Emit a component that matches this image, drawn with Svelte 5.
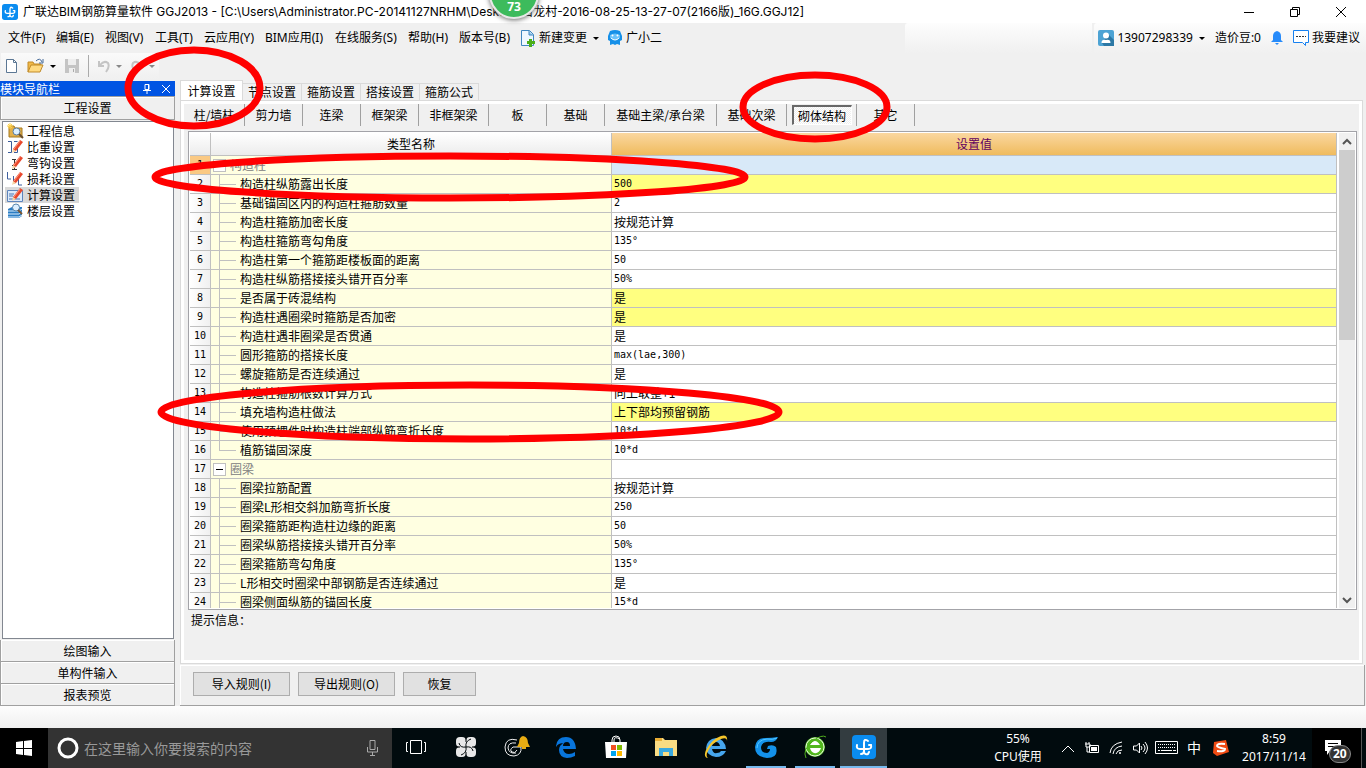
<script lang="ts">
  type Row = { name: string; value: string; group?: boolean; last?: boolean; changed?: boolean };

  const menus = [
    ['文件(F)', 48], ['编辑(E)', 49], ['视图(V)', 50], ['工具(T)', 49], ['云应用(Y)', 61],
    ['BIM应用(I)', 70], ['在线服务(S)', 73], ['帮助(H)', 51], ['版本号(B)', 61],
  ] as [string, number][];

  const tabs = ['计算设置', '节点设置', '箍筋设置', '搭接设置', '箍筋公式'];

  const members = [
    ['柱/墙柱', 61], ['剪力墙', 58], ['连梁', 58], ['框架梁', 58], ['非框架梁', 70], ['板', 58],
    ['基础', 58], ['基础主梁/承台梁', 112], ['基础次梁', 70], ['砌体结构', 70], ['其它', 58],
  ] as [string, number][];

  const navItems = [
    { label: '工程信息', icon: 'info' },
    { label: '比重设置', icon: 'weight' },
    { label: '弯钩设置', icon: 'hook' },
    { label: '损耗设置', icon: 'loss' },
    { label: '计算设置', icon: 'calc' },
    { label: '楼层设置', icon: 'floor' },
  ];

  const rows: Row[] = [
    { name: '构造柱', value: '', group: true },
    { name: '构造柱纵筋露出长度', value: '500', changed: true },
    { name: '基础锚固区内的构造柱箍筋数量', value: '2' },
    { name: '构造柱箍筋加密长度', value: '按规范计算' },
    { name: '构造柱箍筋弯勾角度', value: '135°' },
    { name: '构造柱第一个箍筋距楼板面的距离', value: '50' },
    { name: '构造柱纵筋搭接接头错开百分率', value: '50%' },
    { name: '是否属于砖混结构', value: '是', changed: true },
    { name: '构造柱遇圈梁时箍筋是否加密', value: '是', changed: true },
    { name: '构造柱遇非圈梁是否贯通', value: '是' },
    { name: '圆形箍筋的搭接长度', value: 'max(lae,300)' },
    { name: '螺旋箍筋是否连续通过', value: '是' },
    { name: '构造柱箍筋根数计算方式', value: '向上取整+1' },
    { name: '填充墙构造柱做法', value: '上下部均预留钢筋', changed: true },
    { name: '使用预埋件时构造柱端部纵筋弯折长度', value: '10*d' },
    { name: '植筋锚固深度', value: '10*d', last: true },
    { name: '圈梁', value: '', group: true },
    { name: '圈梁拉筋配置', value: '按规范计算' },
    { name: '圈梁L形相交斜加筋弯折长度', value: '250' },
    { name: '圈梁箍筋距构造柱边缘的距离', value: '50' },
    { name: '圈梁纵筋搭接接头错开百分率', value: '50%' },
    { name: '圈梁箍筋弯勾角度', value: '135°' },
    { name: 'L形相交时圈梁中部钢筋是否连续通过', value: '是' },
    { name: '圈梁侧面纵筋的锚固长度', value: '15*d' },
  ];

  // values made of Latin characters only are set in the fixed-width face
  const isLatin = (text: string) => /^[\x20-\xff]+$/.test(text);

  let activeTab = $state('计算设置');
  let activeMember = $state('砌体结构');
  let activeNav = $state('计算设置');
  let query = $state('');
</script>

{#snippet logo()}
  <rect width="24" height="24" rx="4" fill="#0a8cf0" />
  <path d="M16 6q-4-3-4 2v8q0 4 4 3l1-2M9 19q3 0 3-3M5 10q-1 4 3 4h8q4 0 3-4l-2 0" fill="none" stroke="#fff" stroke-width="2" stroke-linecap="round" />
{/snippet}

{#snippet pencil()}
  <path d="M6 10l7-9 3 2-7 9-3 1z" fill="#e8472c" />
  <path d="M7 10l6-8" stroke="#ff9a80" />
  <path d="M6 10l3 2-4 2z" fill="#f5d7a8" />
{/snippet}

<div class="desktop">
  <header class="titlebar">
    <svg class="app-icon" viewBox="0 0 24 24">{@render logo()}</svg>
    <span class="title">广联达BIM钢筋算量软件 GGJ2013 - [C:\Users\Administrator.PC-20141127NRHM\Desktop\白龙村-2016-08-25-13-27-07(2166版)_16G.GGJ12]</span>
    <div class="window-buttons">
      <button aria-label="最小化"><svg width="12" height="12"><path d="M1 6.500h10" /></svg></button>
      <button aria-label="还原"><svg width="12" height="12"><path d="M1.500 3.500h7v7h-7zM3.500 3v-1.500h7v7H9" /></svg></button>
      <button aria-label="关闭"><svg width="12" height="12"><path d="M1 1l10 10M11 1L1 11" /></svg></button>
    </div>
  </header>

  <nav class="menubar">
    {#each menus as [label, width]}
      <button style={`width: ${width}px`}>{label}</button>
    {/each}
    <button class="with-icon change">
      <svg width="16" height="18"><path d="M1.500 1.500h8l4 4v11h-12z" fill="#eef7ff" stroke="#3f86c0" /><path d="M9 2v4h4" fill="#9ccbee" stroke="#3f86c0" /><path d="M9 10h3v2h3v3h-3v3H9v-3H7v-3h2z" fill="#4bae18" /></svg>
      新建变更
      <i class="caret"></i>
    </button>
    <button class="with-icon">
      <svg width="16" height="16"><path d="M3 1q5-2 10 0l2 5v4l-2 1v4l-3-1-2 1-2-1-3 1v-4L1 10V6z" fill="#1690e8" /><path d="M3 5q5-3 10 0v3q-5 4-10 0z" fill="#69c1fa" /><circle cx="5.500" cy="5.500" r="1" fill="#fff" /><circle cx="10.500" cy="5.500" r="1" fill="#fff" /><path d="M4 8q4 4 8 0" fill="none" stroke="#fff" /></svg>
      广小二
    </button>
    <div class="account-area">
      <div class="account-blank"></div>
      <div class="account">
        <button class="with-icon user">
          <svg width="16" height="16"><rect width="16" height="16" rx="2" fill="#4da3d4" /><path d="M10 4l6 6v6H6l-2-3z" fill="#2c78a5" /><circle cx="8" cy="5.500" r="3" fill="#fff" /><path d="M3.500 13q0-4 4.500-3 4.500-1 4.500 3z" fill="#fff" /></svg>
          13907298339
          <i class="caret"></i>
        </button>
        <button>造价豆:0</button>
        <button class="bell" aria-label="通知"><svg width="12" height="16"><path d="M6 1q4 1 4 5v4l2 2H0l2-2V6q0-4 4-5zM4 13h4l-2 2z" fill="#278bfa" /></svg></button>
        <button class="with-icon">
          <svg width="16" height="16"><path d="M.500.500h15v12h-3v3l-3-3h-9z" fill="#fff" stroke="#1680f0" /><path d="M3 6.500h10" stroke="#333" stroke-dasharray="2 1" /></svg>
          我要建议
        </button>
      </div>
    </div>
  </nav>

  <div class="toolbar">
    <div class="tools">
      <button aria-label="新建"><svg width="14" height="16"><path d="M1.500 1.500h7l3 3v10h-10z" fill="#fff" stroke="#5b7794" /><path d="M8.500 1.500v3h3" fill="none" stroke="#5b7794" /></svg></button>
      <button class="open" aria-label="打开"><svg width="18" height="16"><path d="M1 14V4h5l1 2h7v2" fill="#f1b947" stroke="#c08a28" /><path d="M1 14l3-7h12l-3 7z" fill="#ffda80" stroke="#c08a28" /><path d="M9 3q4-4 6 1m1-3v4h-4" fill="none" stroke="#456a99" /></svg><i class="caret"></i></button>
      <button aria-label="保存"><svg width="16" height="16"><path d="M1 1h14v14H1z" fill="#c4c4c4" /><path d="M4 1h8v6H4zM5 10h6v5H5z" fill="#eee" /><path d="M9 11h1v3H9z" fill="#aaa" /></svg></button>
      <span class="divider"></span>
      <button class="faded" aria-label="撤消"><svg width="14" height="14"><path d="M2 2v5h5M3 6q4-5 8-2 2 4-2 9" /></svg><i class="caret"></i></button>
      <button class="faded" aria-label="恢复"><svg width="14" height="14"><path d="M12 2v5H7m4-1q-4-5-8-2-2 4 2 9" /></svg><i class="caret"></i></button>
    </div>
  </div>

  <div class="workspace">
    <aside class="sidebar">
      <div class="side-head">
        <span>模块导航栏</span>
        <button aria-label="固定"><svg width="10" height="10"><path d="M3 .500h4v5H3zM6.500 1v5M1 6.500h8M5 6v4" /></svg></button>
        <button aria-label="关闭"><svg width="10" height="10"><path d="M1 1l8 8M9 1L1 9" /></svg></button>
      </div>
      <button class="side-button">工程设置</button>
      <ul class="nav-list">
        {#each navItems as item}
          <li>
            <button class:selected={item.label === activeNav} onclick={() => (activeNav = item.label)}>
              <svg width="17" height="16">
                {#if item.icon === 'info'}
                  <path d="M2 3h5l1 2h7v9H2z" fill="#e3b04a" stroke="#a67a20" /><path d="M0 3h6M3 0v6M1 1l4 4M5 1L1 5" stroke="#ffd24a" /><circle cx="9.500" cy="8.500" r="3.500" fill="#dcf0ff" stroke="#587ba0" /><path d="M12 11l4 4" stroke="#6a5030" stroke-width="2" />
                {:else if item.icon === 'weight'}
                  <path d="M1 2.500h3.500v11H1M7 2.500h3.500M8 8.500h2.500v5H7" fill="none" stroke="#3b5c9a" />{@render pencil()}
                {:else if item.icon === 'hook'}
                  <path d="M5 4.500h4M7.500 5v10M5 14.500h5M5 10.500h4" fill="none" stroke="#333" />{@render pencil()}
                {:else if item.icon === 'loss'}
                  <path d="M.500 1v7H4M6.500 5v7M11.500 8v6H15" fill="none" stroke="#3f5f9f" />{@render pencil()}
                {:else if item.icon === 'calc'}
                  <path d="M.500 3.500h15v11H.500z" fill="#dceafa" stroke="#5c84bc" /><path d="M2 7h5M2 9h4M2 12h11" stroke="#4d78b5" />{@render pencil()}
                {:else}
                  <path d="M1 6l4-2h10v9l-3 2H1z" fill="#2b7dc4" /><path d="M1 8h11l3-2M1 11h11l3-2M1 14h11l3-2" fill="none" stroke="#e0f2ff" /><circle cx="9" cy="4.500" r="3.500" fill="#dcefff" stroke="#5585ad" /><path d="M11 7l4 4" stroke="#765533" stroke-width="2" />
                {/if}
              </svg>
              <span>{item.label}</span>
            </button>
          </li>
        {/each}
      </ul>
      <button class="side-button">绘图输入</button>
      <button class="side-button">单构件输入</button>
      <button class="side-button">报表预览</button>
    </aside>

    <main>
      <div class="tabs">
        {#each tabs as tab}
          <button class:active={tab === activeTab} onclick={() => (activeTab = tab)}>{tab}</button>
        {/each}
      </div>
      <section class="panel">
        <div class="members">
          {#each members as [label, width]}
            <div class="member" style={`width: ${width}px`}>
              <button class:pressed={label === activeMember} onclick={() => (activeMember = label)}>{label}</button>
            </div>
          {/each}
        </div>
        <div class="grid-frame">
          <div class="grid">
            <table>
              <colgroup><col class="col-no" /><col class="col-name" /><col /></colgroup>
              <thead>
                <tr><th></th><th>类型名称</th><th class="current">设置值</th></tr>
              </thead>
              <tbody>
                {#each rows as row, i}
                  <tr class:changed={row.changed} class:focused={i === 0}>
                    <td class="no"><div>{i + 1}</div></td>
                    <td class="name">
                      <div>
                        {#if row.group}
                          <button class="toggle" aria-label="折叠"></button><span class="group">{row.name}</span>
                        {:else}
                          <i class="branch" class:last={row.last}></i><span>{row.name}</span>
                        {/if}
                      </div>
                    </td>
                    <td class="value"><div class:latin={isLatin(row.value)}>{row.value}</div></td>
                  </tr>
                {/each}
              </tbody>
            </table>
          </div>
          <div class="scrollbar">
            <button aria-label="向上"><svg width="10" height="8"><path d="M1 6l4-4 4 4" /></svg></button>
            <div class="thumb"></div>
            <button aria-label="向下"><svg width="10" height="8"><path d="M1 2l4 4 4-4" /></svg></button>
          </div>
        </div>
        <p class="hint">提示信息：</p>
      </section>
      <footer class="actions">
        <button>导入规则(I)</button>
        <button>导出规则(O)</button>
        <button class="short">恢复</button>
      </footer>
    </main>
  </div>

  <div class="status"></div>

  <div class="taskbar">
    <button class="start" aria-label="开始"><svg width="16" height="16"><path d="M0 2l7-1v7H0zM8 1l8-1v8H8zM0 9h7v6l-7-1zM8 9h8v7l-8-1z" fill="#fff" /></svg></button>
    <div class="search">
      <svg width="24" height="24"><circle cx="12" cy="12" r="9" fill="none" stroke="#fff" stroke-width="3" /></svg>
      <input aria-label="搜索" placeholder="在这里输入你要搜索的内容" bind:value={query} />
      <svg width="12" height="18"><path d="M4 1.500h5v9H4zM1.500 8v5h10V8M6.500 13v4M4 16.500h5" fill="none" stroke="#aaa" /></svg>
    </div>
    <div class="apps">
      <button aria-label="任务视图"><svg width="22" height="16"><path d="M5.500 1.500h11v13h-11zM3 3.500H1.500v9H3M19 3.500h1.500v9H19" fill="none" stroke="#fff" /></svg></button>
      <button aria-label="风扇"><svg width="22" height="22"><g fill="#e8e8e8"><rect x="1" y="1" width="10" height="10" rx="4" /><rect x="11" y="1" width="10" height="10" rx="4" /><rect x="1" y="11" width="10" height="10" rx="4" /><rect x="11" y="11" width="10" height="10" rx="4" /><circle cx="11" cy="11" r="4" /></g><path d="M11 11Q5 12 4 7M11 11q-1-6 5-8M11 11q6-1 7 4M11 11q1 6-5 8M11 1v5M11 16v5M1 11h4M17 11h4" fill="none" stroke="#02090b" /></svg></button>
      <button aria-label="提醒"><svg width="28" height="24"><path d="M15 5Q4 2 3 12q0 9 9 9 8-1 7-9h-8q-4 3-1 5 3 2 5-2M14 8Q6 7 6 13q1 6 8 5" fill="none" stroke="#eee" /><path d="M21 1q5 1 5 7l2 4H15l2-4q0-6 4-7zM20 12h4v2h-4z" fill="#e9ad13" /></svg></button>
      <button aria-label="Edge"><svg width="22" height="22"><path d="M1 10Q2 1 11 1q9 0 10 12H8q1 5 6 5 3 0 6-2v4q-4 2-8 2-8-1-8-8 0-5 5-7-6 0-8 4zm7 0h7q0-4-3-4-4 0-4 4z" fill="#0875dc" /></svg></button>
      <button aria-label="应用商店"><svg width="24" height="24"><path d="M8 8V5q0-4 4-4t4 4v3M10 8V5q0-4 6-1" fill="none" stroke="#fff" /><path d="M1 7h22l-1 16H2z" fill="#fff" /><path d="M7 10h5v5H7z" fill="#f25022" /><path d="M13 10h5v5h-5z" fill="#7fba00" /><path d="M7 16h5v5H7z" fill="#00a4ef" /><path d="M13 16h5v5h-5z" fill="#ffb900" /></svg></button>
      <button aria-label="文件资源管理器"><svg width="24" height="20"><path d="M1 1h8l2 2h12v16H1z" fill="#f9dc83" /><path d="M1 1h7v3H1z" fill="#e9ae35" /><path d="M5 19v-8h14v8h-4v-4H9v4z" fill="#39a9e0" /></svg></button>
      <button aria-label="Internet Explorer"><svg width="26" height="24"><path d="M3 13Q4 4 13 3q9 1 10 11H9q1 5 5 4 3 0 4-2h5q-3 6-10 6Q4 21 3 13zm6-2h8q-1-4-4-4t-4 4z" fill="#46a6ed" /><path d="M5 23q-5-1-2-8Q9 4 18 1q7-2 6 5 0-4-6-2Q8 8 4 18q-1 4 1 5z" fill="#f6c62b" /></svg></button>
      <button class="running" aria-label="浏览器"><svg width="26" height="24"><path d="M25 2q-2 5-7 5-9-1-10 5 0 6 6 6 3-1 3-4l-3 0 1-3q5-2 8 1 3 11-9 11Q2 22 2 12 3 3 12 3q7 0 13-1z" fill="#1492ea" /><path d="M24 3q-4 2-10 1Q4 5 4 13" fill="none" stroke="#54c8ff" /></svg></button>
      <button class="running" aria-label="安全浏览器"><svg width="24" height="24"><circle cx="12" cy="12" r="10" fill="#52b71e" /><circle cx="12" cy="12" r="9" fill="none" stroke="#ecf9e5" /><path d="M7 10q5-8 10 0zM7 13h11q-2 6-7 5-3-1-4-5z" fill="#fff" /><path d="M3 23q-4-8 7-17 9-7 13-4" fill="none" stroke="#4fae1d" /></svg></button>
      <button class="running current" aria-label="广联达"><svg width="24" height="24">{@render logo()}</svg></button>
    </div>
    <div class="tray">
      <div class="cpu">55%<br />CPU使用</div>
      <button class="slot" aria-label="显示隐藏的图标"><svg width="14" height="9"><path d="M1 8l6-6 6 6" /></svg></button>
      <button class="slot" aria-label="电池"><svg width="16" height="14"><path d="M5.500 4.500h9v7h-9zM1 3h5v3H2V3M2 1v2M5 1v2M3 6v5h2" /><path class="solid" d="M7 6h6v4H7z" /></svg></button>
      <button class="slot" aria-label="网络"><svg width="14" height="14"><path d="M1 12Q2 3 13 1M4 13q1-7 9-8M7 13q1-4 6-4" /><circle cx="11" cy="12" r="1" fill="#fff" /></svg></button>
      <button class="slot" aria-label="音量"><svg width="17" height="14"><path d="M1.500 5h3l3-3v10l-3-3h-3zM9 5q2 2 0 4M11 3q4 4 0 8M13 1q5 6 0 12" /></svg></button>
      <button class="slot wide" aria-label="触摸键盘"><svg width="24" height="14"><path d="M.500.500h22v12H.500z" /><path d="M3 3.500h18M3 6.500h18" stroke-dasharray="1 1" /><path d="M3 9.500h2m1 0h11m1 0h3" /></svg></button>
      <button class="slot ime">中</button>
      <button class="slot wide" aria-label="搜狗输入法"><svg width="16" height="16"><path class="sogou" d="M1 2l12-2 3 12-12 4-4-3z" /><path class="thick" d="M12 4q-8-1-8 2 0 1 8 3 0 3-8 2" /></svg></button>
      <div class="clock">8:59<br />2017/11/14</div>
      <button class="notice" aria-label="操作中心"><svg width="16" height="16"><path class="solid" d="M0 0h16v11H5l-3 4v-4H0z" /><path class="dark" d="M3 3.500h10M3 6.500h8" /></svg><span>20</span></button>
    </div>
  </div>

  <div class="speed-ball">73</div>

  <svg class="marks" width="900" height="460" aria-hidden="true">
    <ellipse cx="194" cy="88" rx="66" ry="38" />
    <ellipse cx="815" cy="107" rx="72" ry="32" />
    <ellipse cx="450" cy="177" rx="295" ry="21" />
    <ellipse cx="470" cy="412" rx="309" ry="27" />
  </svg>
</div>

<style>
  :global(body) {
    margin: 0;
    background: #f0f0f0;
  }

  .desktop {
    position: relative;
    display: flex;
    flex-direction: column;
    height: 100vh;
    min-height: 480px;
    overflow: hidden;
    background: #f0f0f0;
    color: #000;
    font: 12px/16px "Noto Sans CJK SC", sans-serif;
  }

  button {
    display: flex;
    align-items: center;
    justify-content: center;
    margin: 0;
    padding: 0;
    border: 0;
    background: none;
    color: inherit;
    font: inherit;
    white-space: nowrap;
  }

  svg {
    flex: none;
  }

  .titlebar {
    display: flex;
    align-items: center;
    flex: none;
    height: 23px;
    padding-left: 2px;
    background: #fff;
    font-family: Inter, "Noto Sans CJK SC", sans-serif;
  }

  .app-icon {
    width: 16px;
    height: 16px;
    margin-right: 5px;
  }

  .title {
    flex: 1;
    min-width: 0;
    overflow: hidden;
    white-space: nowrap;
  }

  .window-buttons {
    display: flex;
    height: 20px;
    margin-right: 2px;
  }

  .window-buttons button {
    width: 46px;
  }

  .window-buttons path {
    fill: none;
    stroke: #000;
  }

  .menubar {
    display: flex;
    flex: none;
    height: 30px;
    padding-left: 8px;
    font-family: "Noto Sans", "Noto Sans CJK SC", sans-serif;
  }

  .menubar button {
    justify-content: flex-start;
  }

  .with-icon {
    gap: 3px;
  }

  .change {
    margin-right: 8px;
  }

  .caret {
    margin-left: 3px;
    border: 3px solid transparent;
    border-top-color: #000;
    border-bottom-width: 0;
  }

  .account-area {
    display: flex;
    gap: 2px;
    margin-left: auto;
  }

  .account-blank,
  .account {
    border-radius: 3px 0 0 0;
    background: linear-gradient(#fdfdfd, #f0f0f0);
  }

  .account-blank {
    width: 187px;
  }

  .account {
    display: flex;
    gap: 10px;
    padding: 0 6px 0 4px;
  }

  .toolbar {
    display: flex;
    align-items: flex-start;
    flex: none;
    height: 27px;
  }

  .tools {
    display: flex;
    align-items: center;
    gap: 8px;
    height: 26px;
    margin-left: 1px;
    padding: 0 4px;
    background: linear-gradient(#fafafa, #f0f0f0);
  }

  .tools .caret {
    margin-left: 5px;
  }

  .divider {
    width: 1px;
    height: 22px;
    background: #aaa;
  }

  .faded path {
    fill: none;
    stroke: #c4c4c4;
    stroke-width: 2;
  }

  .faded .caret {
    border-top-color: #888;
  }

  .workspace {
    display: flex;
    flex: 1;
    gap: 5px;
    min-height: 0;
    padding-top: 1px;
  }

  .sidebar {
    display: flex;
    flex-direction: column;
    flex: none;
    width: 175px;
  }

  .side-head {
    display: flex;
    flex: none;
    gap: 9px;
    height: 15px;
    padding-right: 4px;
    background: #0054e3;
    color: #fff;
    line-height: 15px;
  }

  .side-head span {
    flex: 1;
  }

  .side-head path {
    fill: none;
    stroke: #fff;
  }

  .side-button {
    flex: none;
    height: 22px;
    border: 1px solid #a0a0a0;
    border-width: 0 1px 1px;
    box-shadow: inset 1px 1px #fff;
  }

  .side-head + .side-button {
    height: 24px;
    border-top-width: 1px;
  }

  .nav-list {
    flex: 1;
    min-height: 0;
    margin: 1px 1px 1px 2px;
    padding: 1px 2px;
    border: 1px solid #828790;
    background: #fff;
    list-style: none;
    overflow: hidden;
  }

  .nav-list button {
    gap: 2px;
    height: 16px;
    padding-left: 2px;
  }

  .nav-list span {
    padding: 0 4px 0 1px;
  }

  .nav-list .selected {
    background: #d9d9d9;
  }

  main {
    display: flex;
    flex: 1;
    flex-direction: column;
    min-width: 0;
    padding-right: 1px;
  }

  .tabs {
    display: flex;
    align-items: flex-end;
    flex: none;
    height: 19px;
  }

  .tabs button {
    width: 59px;
    height: 17px;
    border: 1px solid #dadada;
    border-width: 1px 1px 0 0;
  }

  .tabs .active {
    width: 63px;
    height: 20px;
    border-left-width: 1px;
    background: #fff;
  }

  .panel {
    display: flex;
    flex: 1;
    flex-direction: column;
    min-height: 0;
    margin-right: 2px;
    border: 1px solid #dadada;
    box-shadow: inset 0 0 0 3px #fff;
    padding: 3px;
  }

  .members {
    display: flex;
    flex: none;
    height: 22px;
    margin-bottom: 5px;
  }

  .member {
    display: flex;
    align-items: center;
    justify-content: center;
    box-sizing: border-box;
    border-right: 1px solid #a0a0a0;
  }

  .pressed {
    width: 60px;
    height: 20px;
    border: 1px solid #fff;
    border-top: 2px solid #696969;
    border-left: 2px solid #696969;
    background: repeating-conic-gradient(#fff 0 25%, #eee 0 50%) 0 0 / 2px 2px;
  }

  .grid-frame {
    display: flex;
    flex: 1;
    gap: 2px;
    min-height: 0;
    margin: 0 2px 0 4px;
    padding: 1px;
    border: 1px solid #a3a3a8;
    background: #fff;
  }

  .grid {
    flex: 1;
    min-width: 0;
    overflow: hidden;
  }

  table {
    width: 100%;
    border-spacing: 0;
    table-layout: fixed;
  }

  .col-no {
    width: 21px;
  }

  .col-name {
    width: 401px;
  }

  th,
  td {
    padding: 0;
    border-right: 1px solid #c0c0c0;
    border-bottom: 1px solid #c0c0c0;
  }

  th {
    height: 22px;
    background: linear-gradient(#fff, #ececec);
    font-weight: 400;
    line-height: 20px;
  }

  th.current {
    background: linear-gradient(#fad7a0, #efbb5d);
    color: #600060;
  }

  td div {
    display: flex;
    align-items: center;
    height: 18px;
    line-height: 18px;
  }

  .no {
    background: linear-gradient(90deg, #fff, #f0f0f0);
  }

  .no div {
    justify-content: center;
  }

  .no div,
  .value .latin {
    font-family: "DejaVu Sans Mono", monospace;
    font-size: 10px;
  }

  .value div {
    padding-left: 2px;
  }

  .name {
    background: #ffffe1;
  }

  .changed .value {
    background: #ffff80;
  }

  .focused .no {
    background: #fac983;
  }

  .focused .value {
    background: #d8e9f8;
  }

  .branch {
    width: 17px;
    height: 18px;
    margin: 0 4px 0 8px;
    background:
      linear-gradient(#c0c0c0, #c0c0c0) 0 0 / 1px 100% no-repeat,
      linear-gradient(#c0c0c0, #c0c0c0) 0 9px / 100% 1px no-repeat;
  }

  .branch.last {
    background:
      linear-gradient(#c0c0c0, #c0c0c0) 0 0 / 1px 9px no-repeat,
      linear-gradient(#c0c0c0, #c0c0c0) 0 9px / 100% 1px no-repeat;
  }

  .toggle {
    width: 13px;
    height: 13px;
    margin: 0 4px 0 2px;
    border: 1px solid #c0c0c0;
    background: linear-gradient(#000, #000) center / 7px 1px no-repeat #fff;
  }

  .group {
    color: #808080;
  }

  .scrollbar {
    display: flex;
    flex-direction: column;
    flex: none;
    width: 16px;
    background: #f0f0f0;
  }

  .scrollbar button {
    height: 17px;
  }

  .scrollbar path {
    fill: none;
    stroke: #555;
    stroke-width: 2;
  }

  .thumb {
    height: 190px;
    margin-bottom: auto;
    background: #cdcdcd;
  }

  .hint {
    flex: none;
    height: 46px;
    margin: 0;
    padding: 2px 7px;
  }

  .actions {
    display: flex;
    flex: none;
    gap: 8px;
    margin-top: 1px;
    padding: 7px 13px 9px;
    border: 1px solid #a0a0a0;
    border-width: 0 1px 1px 0;
    box-shadow: inset 1px 1px #fff;
  }

  .actions button {
    width: 97px;
    height: 24px;
    border: 1px solid #adadad;
    background: #e1e1e1;
  }

  .actions .short {
    width: 73px;
  }

  .status {
    flex: none;
    height: 22px;
    background: linear-gradient(#fdfdfd, #f0f0f0);
  }

  .taskbar {
    display: flex;
    flex: none;
    height: 40px;
    background: #010b0e;
    color: #fff;
    font-family: "Noto Sans", "Noto Sans CJK SC", sans-serif;
  }

  .start {
    width: 48px;
    background: #000;
  }

  .search {
    display: flex;
    align-items: center;
    box-sizing: border-box;
    width: 344px;
    padding: 0 14px 0 8px;
    background: #333;
  }

  .search input {
    flex: 1;
    min-width: 0;
    padding: 0 4px;
    border: 0;
    outline: 0;
    background: none;
    color: #fff;
    font: 14px/20px "Noto Sans CJK SC", sans-serif;
  }

  .search input::placeholder {
    color: #999;
    opacity: 1;
  }

  .apps {
    display: flex;
    gap: 2px;
  }

  .apps button {
    width: 48px;
    border-bottom: 2px solid transparent;
  }

  .apps .running {
    width: 47px;
    background: linear-gradient(#76b9ed, #76b9ed) center bottom / 40px 2px no-repeat border-box;
  }

  .apps .current {
    border-color: #76b9ed;
    background: #333c40;
  }

  .tray {
    display: flex;
    align-items: center;
    margin: 0 4px 0 auto;
  }

  .tray path {
    fill: none;
    stroke: #fff;
  }

  .tray .solid {
    fill: #fff;
    stroke: none;
  }

  .tray .dark {
    stroke: #000;
  }

  .tray .sogou {
    fill: #f04b13;
    stroke: none;
  }

  .tray .thick {
    stroke-width: 2;
  }

  .cpu,
  .clock {
    line-height: 18px;
    text-align: center;
  }

  .cpu {
    width: 60px;
    margin-right: 8px;
  }

  .clock {
    width: 76px;
  }

  .slot {
    width: 24px;
    height: 40px;
  }

  .slot.wide {
    width: 30px;
  }

  .ime {
    font-size: 14px;
  }

  .notice {
    gap: 0;
    justify-content: flex-start;
    width: 50px;
    height: 40px;
    padding-left: 13px;
    border-right: 1px solid #555;
    background: #000;
  }

  .notice span {
    margin: 12px 0 0 -12px;
    padding: 0 3px;
    border: 1px solid #888;
    border-radius: 9px;
    background: #333;
    font-weight: 700;
    line-height: 16px;
  }

  .speed-ball {
    position: absolute;
    top: -31px;
    left: 489px;
    box-sizing: border-box;
    width: 50px;
    height: 50px;
    border: 2px solid #e8e8e8;
    border-radius: 50%;
    background: #3dbb5c;
    box-shadow: 0 1px 5px #666;
    color: #fff;
    font-family: "Noto Sans", sans-serif;
    font-weight: 700;
    line-height: 72px;
    text-align: center;
  }

  .marks {
    position: absolute;
    top: 0;
    left: 0;
    pointer-events: none;
  }

  .marks ellipse {
    fill: none;
    stroke: #f00;
    stroke-width: 7;
  }
</style>
